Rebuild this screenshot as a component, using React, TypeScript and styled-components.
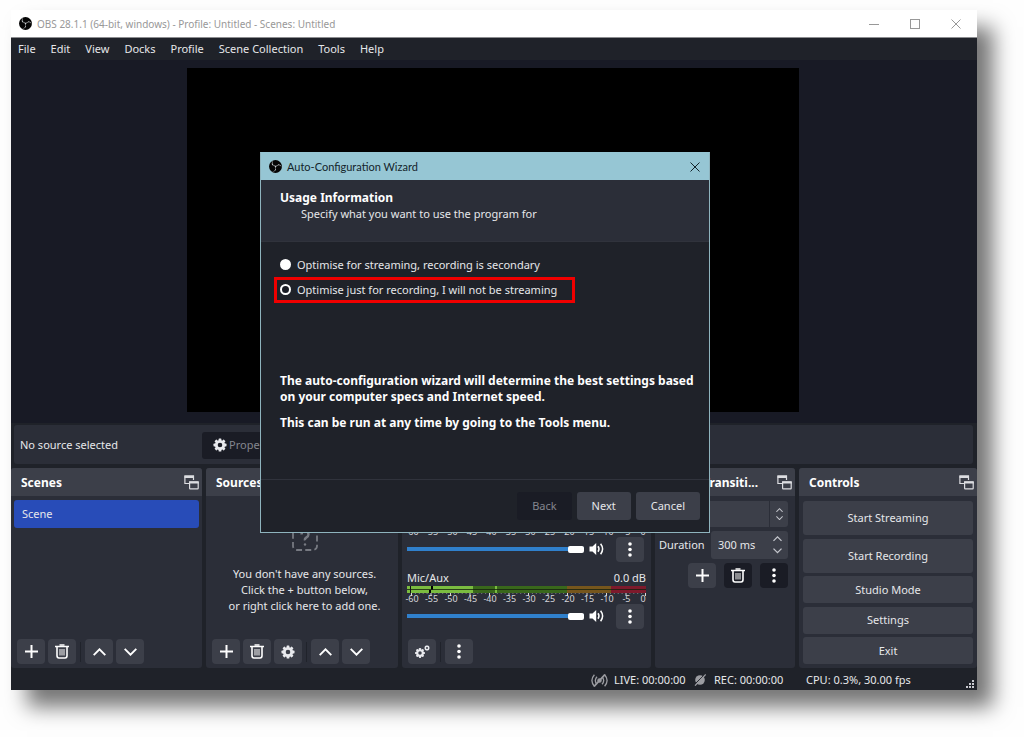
import React from "react";
import styled, { createGlobalStyle, css } from "styled-components";
import { SiObsstudio } from "react-icons/si";

const GlobalStyle = createGlobalStyle`
  * { box-sizing: border-box; }
  body {
    margin: 0;
    background: #fefefe;
    font-family: "Noto Sans", "Open Sans", sans-serif;
    font-size: 11px;
    line-height: 16px;
    color: #e6e7ea;
  }
  button, input, select { font: inherit; color: inherit; }
  p, h1, h2 { margin: 0; }
`;

const Page = styled.div`
  padding: 10px 47px 47px 11px;
`;

const Window = styled.div`
  position: relative;
  display: flex;
  flex-direction: column;
  background: #1f2229;
  box-shadow: 16px 17px 20px rgba(0, 0, 0, 0.54);
`;

/* ---------- title bars ---------- */

const TitleBar = styled.header<{ $accent?: boolean }>`
  display: flex;
  align-items: center;
  gap: 5px;
  height: 28px;
  padding: 0 7px 0 8px;
  font-family: ${(p) => (p.$accent ? 'Lato, "Open Sans", sans-serif' : '"Noto Sans", "Open Sans", sans-serif')};
  font-size: ${(p) => (p.$accent ? 11 : 10)}px;
  background: ${(p) => (p.$accent ? "#96c6d4" : "#ffffff")};
  color: ${(p) => (p.$accent ? "#14242b" : "#989898")};
  border-bottom: ${(p) => (p.$accent ? "none" : "1px solid #8c8d90")};
`;

const TitleText = styled.h1`
  flex: 1;
  font-size: inherit;
  font-weight: 400;
`;

const LogoDisc = styled.span`
  display: flex;
  align-items: center;
  justify-content: center;
  flex: none;
  width: 13px;
  height: 13px;
  border-radius: 50%;
  overflow: hidden;
  background: #050505;
  color: #c9cdd0;
  svg { flex: none; }
`;

const CaptionButtons = styled.div`
  display: flex;
  gap: 13px;
`;

const CaptionButton = styled.button`
  display: flex;
  align-items: center;
  justify-content: center;
  width: 28px;
  height: 26px;
  padding: 0;
  border: none;
  background: none;
`;

/* ---------- menu ---------- */

const MenuBar = styled.nav`
  display: flex;
  gap: 15px;
  height: 22px;
  padding: 2px 7px;
  background: #1f2229;
`;

const MenuItem = styled.button`
  padding: 0;
  border: none;
  background: none;
  line-height: 18px;
`;

/* ---------- preview and context bar ---------- */

const Preview = styled.main`
  display: flex;
  justify-content: center;
  padding: 8px 2px 11px 0;
  background: #181a25;
`;

const Canvas = styled.div`
  width: 612px;
  max-width: 100%;
  height: 344px;
  background: #000;
`;

const ContextBar = styled.div`
  display: flex;
  align-items: center;
  height: 39px;
  margin: 2px 4px 4px 3px;
  padding: 1px 6px 0;
  background: #2b2e38;
  border-radius: 3px;
`;

const ContextLabel = styled.span`
  width: 182px;
`;

const PropertiesButton = styled.button`
  display: flex;
  align-items: center;
  gap: 2px;
  height: 27px;
  padding: 0 11px;
  border: none;
  border-radius: 3px;
  background: #1a1c25;
  color: #84868e;
`;

/* ---------- docks ---------- */

const Docks = styled.div`
  display: grid;
  grid-template-columns: 191fr 192fr 249fr 140fr 178fr;
  column-gap: 4px;
`;

const DockPanel = styled.section`
  display: flex;
  flex-direction: column;
  min-width: 0;
  height: 200px;
  background: #2b2e38;
  border-radius: 3px;
  overflow: hidden;
`;

const DockHeader = styled.div`
  display: flex;
  align-items: center;
  gap: 8px;
  height: 28px;
  flex: none;
  padding: 1px 3px 0 10px;
  background: #3c3f49;
`;

const DockTitle = styled.h2`
  flex: 1;
  min-width: 0;
  font-size: 12px;
  font-weight: 700;
  color: #fefefe;
  white-space: nowrap;
`;

const PlainButton = styled.button`
  display: flex;
  padding: 0;
  border: none;
  background: none;
`;

const Toolbar = styled.div`
  display: flex;
  align-items: center;
  gap: 3px;
  margin-top: auto;
  padding: 0 6px 4px;
`;

const Separator = styled.span`
  width: 1px;
  height: 20px;
  margin: 0 1px;
  background: #20232b;
`;

const ToolButton = styled.button<{ $dim?: boolean }>`
  display: flex;
  align-items: center;
  justify-content: center;
  flex: none;
  width: 28px;
  height: 25px;
  padding: 0;
  border: none;
  border-radius: 4px;
  background: ${(p) => (p.$dim ? "#1a1c25" : "#3c3f49")};
`;

const SceneList = styled.ul`
  margin: 0;
  padding: 4px 3px;
  list-style: none;
`;

const SceneItem = styled.li`
  height: 28px;
  padding: 6px 8px;
  border-radius: 3px;
  background: #284cb8;
`;

const EmptySources = styled.div`
  display: flex;
  flex-direction: column;
  align-items: center;
  gap: 15px;
  padding: 29px 0 0 5px;
  text-align: center;
  p { white-space: pre-line; }
`;

/* ---------- mixer ---------- */

const MixerBody = styled.div`
  display: flex;
  flex-direction: column;
  gap: 9px;
  padding: 7px 5px 0;
`;

const Channel = styled.div`
  display: flex;
  flex-direction: column;
  height: 58px;
  justify-content: flex-end;
`;

const ChannelHead = styled.div`
  display: flex;
  justify-content: space-between;
`;

const Meter = styled.svg`
  display: block;
  width: 100%;
  height: 18px;
  overflow: visible;
  text {
    font-size: 9px;
    fill: #d5d6da;
    text-anchor: middle;
  }
`;

const VolumeRow = styled.div`
  display: flex;
  align-items: center;
  height: 24px;
`;

const Volume = styled.input`
  appearance: none;
  flex: 1;
  min-width: 0;
  height: 8px;
  margin: 0 5px 0 0;
  background: linear-gradient(#3080cc, #3080cc) center / 100% 4px no-repeat;
  &::-webkit-slider-thumb {
    appearance: none;
    width: 16px;
    height: 7px;
    border-radius: 2px;
    background: #fff;
  }
`;

const MuteButton = styled(PlainButton)`
  width: 16px;
  margin-right: 11px;
`;

const ChannelMenu = styled(ToolButton)`
  margin-right: 2px;
`;

/* ---------- transitions ---------- */

const TransitionBody = styled.div`
  display: flex;
  flex-direction: column;
  gap: 4px;
  padding: 5px 7px 0 4px;
`;

const SelectBox = styled.div`
  display: grid;
  grid-template-columns: 1fr 18px;
  gap: 1px;
  height: 26px;
  border-radius: 3px;
  overflow: hidden;
`;

const TransitionSelect = styled.select`
  appearance: none;
  min-width: 0;
  border: none;
  background: #3c3f49;
`;

const SelectArrows = styled.span`
  display: flex;
  align-items: center;
  justify-content: center;
  background: #3c3f49;
`;

const DurationRow = styled.div`
  display: flex;
  align-items: center;
  gap: 4px;
  label { flex: 1; }
`;

const SpinBox = styled.div`
  display: flex;
  align-items: center;
  width: 77px;
  height: 28px;
  padding: 0 6px 0 7px;
  border-radius: 3px;
  background: #3c3f49;
`;

const SpinInput = styled.input`
  flex: 1;
  min-width: 0;
  padding: 0;
  border: none;
  background: none;
`;

const TransitionButtons = styled.div`
  display: flex;
  justify-content: flex-end;
  gap: 8px;
`;

/* ---------- controls ---------- */

const ControlsBody = styled.div`
  flex: 1;
  display: flex;
  flex-direction: column;
  justify-content: space-between;
  padding: 5px 4px 4px;
`;

const ControlButton = styled.button<{ $tall?: boolean }>`
  height: ${(p) => (p.$tall ? 34 : 27)}px;
  padding: 0;
  border: none;
  border-radius: 3px;
  background: #3c3f49;
`;

/* ---------- status bar ---------- */

const StatusBar = styled.footer`
  display: flex;
  align-items: center;
  justify-content: flex-end;
  height: 22px;
  padding: 2px 2px 0 0;
`;

const StatusItem = styled.span<{ $width?: number; $gap?: number }>`
  display: flex;
  align-items: center;
  gap: ${(p) => p.$gap ?? 6}px;
  width: ${(p) => (p.$width ? p.$width + "px" : "auto")};
`;

const Grip = styled.svg`
  align-self: flex-end;
  margin-bottom: 1px;
`;

/* ---------- wizard ---------- */

const Dialog = styled.form`
  position: absolute;
  left: 249px;
  top: 142px;
  width: 450px;
  display: flex;
  flex-direction: column;
  border: 1px solid #8fb4be;
  border-top-color: #96c6d4;
  background: #1f2229;
`;

const DialogTitle = styled(TitleBar)`
  height: 27px;
  padding: 0 0 0 8px;
`;

const DialogHeader = styled.div`
  height: 62px;
  padding: 9px 19px;
  background: #2b2e38;
  border-bottom: 1px solid #30333c;
  h2 {
    font-size: 12px;
    line-height: 17px;
    color: #fefefe;
  }
  p {
    line-height: 16px;
    padding-left: 21px;
  }
`;

const DialogBody = styled.div`
  display: flex;
  flex-direction: column;
  align-items: flex-start;
  height: 237px;
  padding: 13px 9px 0 19px;
`;

const Option = styled.label<{ $marked?: boolean }>`
  display: flex;
  align-items: center;
  gap: 6px;
  height: 20px;
  margin-bottom: 5px;
  ${(p) =>
    p.$marked &&
    css`
      outline: 3px solid #f00000;
      outline-offset: 0;
      margin-left: -3px;
      padding: 0 15px 0 3px;
    `}
`;

const Radio = styled.input`
  appearance: none;
  width: 11px;
  height: 11px;
  margin: 0 0 1px;
  border: 2px solid #fff;
  border-radius: 50%;
  background: #fff;
  &:checked { background: #1a1c25; }
`;

const Advice = styled.div`
  display: flex;
  flex-direction: column;
  gap: 10px;
  margin-top: 68px;
  font-size: 12px;
  font-weight: 700;
  color: #fefefe;
`;

const DialogFooter = styled.div`
  display: flex;
  justify-content: flex-end;
  gap: 5px;
  height: 53px;
  padding: 12px 9px 0;
  border-top: 1px solid #30333c;
`;

const DialogButton = styled.button`
  min-width: 54px;
  height: 28px;
  padding: 0 15px;
  border: none;
  border-radius: 3px;
  background: #3c3f49;
  &:disabled {
    background: #1a1c25;
    color: #84868e;
  }
`;

/* ---------- icons ---------- */

const Logo = () => (
  <LogoDisc>
    <SiObsstudio size={15} />
  </LogoDisc>
);

const CloseIcon = () => (
  <svg width="10" height="10" viewBox="0 0 10 10" stroke="currentColor" fill="none">
    <path d="M0.5 0.5l9 9M9.5 0.5l-9 9" />
  </svg>
);

const PlusIcon = () => (
  <svg width="13" height="13" viewBox="0 0 13 13" stroke="#fefefe" strokeWidth="2">
    <path d="M6.5 0v13M0 6.5h13" />
  </svg>
);

const TrashIcon = () => (
  <svg width="14" height="15" viewBox="0 0 14 15" fill="none" stroke="#fefefe">
    <path d="M0 2.5h14" strokeWidth="1.6" />
    <path d="M4.5 1h5" strokeWidth="1.6" />
    <path d="M2 3v8.8q0 2.2 2 2.2h6q2 0 2-2.2V3" strokeWidth="1.6" />
    <path d="M5 5v6.5M7 5v6.5M9 5v6.5" strokeWidth="1" />
  </svg>
);

const ChevronIcon = ({ down, size = 13 }: { down?: boolean; size?: number }) => (
  <svg width={size} height={(size * 8) / 13} viewBox="0 0 13 8" fill="none" stroke={size < 13 ? "#c4c6cc" : "#fefefe"} strokeWidth="1.9">
    <path d={down ? "M0.7 0.9L6.5 6.7L12.3 0.9" : "M0.7 7.1L6.5 1.3L12.3 7.1"} />
  </svg>
);

const ArrowPair = styled.span<{ $gap: number }>`
  display: flex;
  flex-direction: column;
  gap: ${(p) => p.$gap}px;
`;

const DotsIcon = () => (
  <svg width="4" height="15" viewBox="0 0 4 15" fill="#fefefe">
    <circle cx="2" cy="2" r="1.8" />
    <circle cx="2" cy="7.5" r="1.8" />
    <circle cx="2" cy="13" r="1.8" />
  </svg>
);

const teeth = [0, 45, 90, 135, 180, 225, 270, 315];

const GearShape = ({ x, y, s }: { x: number; y: number; s: number }) => (
  <g transform={`translate(${x} ${y}) scale(${s})`} fill="#e9eaee">
    <circle r="4" fill="none" stroke="#e9eaee" strokeWidth="3" />
    {teeth.map((a) => (
      <rect key={a} x="-1.5" y="-7" width="3" height="3" rx="0.6" transform={`rotate(${a})`} />
    ))}
  </g>
);

const GearIcon = () => (
  <svg width="14" height="14" viewBox="0 0 14 14">
    <GearShape x={7} y={7} s={0.93} />
  </svg>
);

const GearsIcon = () => (
  <svg width="15" height="13" viewBox="0 0 15 13">
    <GearShape x={5} y={8} s={0.7} />
    <GearShape x={12} y={3} s={0.4} />
  </svg>
);

const PopOutIcon = () => (
  <svg width="15" height="15" viewBox="0 0 15 15" fill="none" stroke="#dcdde1">
    <path d="M5 8.5H0.9V1H9.5V5" strokeWidth="1.2" />
    <path d="M0.5 1.7h9.5" strokeWidth="2.4" />
    <rect x="5.6" y="7" width="8.6" height="6.8" rx="0.6" strokeWidth="1.2" />
    <path d="M5 7.4h9.8" strokeWidth="2.4" />
  </svg>
);

const SpeakerIcon = () => (
  <svg width="16" height="14" viewBox="0 0 16 14" fill="none" stroke="#fefefe">
    <path d="M0.5 4.5h3L7.2 1v12L3.5 9.5h-3z" fill="#fefefe" stroke="none" />
    <path d="M9 4.3q2 2.7 0 5.4" strokeWidth="1.5" />
    <path d="M11.6 1.8q4 5.2 0 10.4" strokeWidth="1.5" />
  </svg>
);

const MissingIcon = () => (
  <svg width="26" height="26" viewBox="0 0 26 26" fill="none" stroke="#777a82" strokeWidth="1.8">
    <rect x="1" y="1" width="24" height="24" rx="4" strokeDasharray="6 3.2" />
    <path d="M9.5 9.5q0-3.5 3.5-3.5t3.5 3.2q0 2-2 3.2t-1.5 3" strokeWidth="2.4" />
    <circle cx="13" cy="19.5" r="1.2" fill="#777a82" stroke="none" />
  </svg>
);

const LiveIcon = () => (
  <svg width="17" height="13" viewBox="0 0 17 13" fill="none" stroke="#9b9ca1" strokeWidth="1.3">
    <path d="M3.4 0.8q-5 5.7 0 11.4M6 2.8q-3.4 3.7 0 7.4M13.6 0.8q5 5.7 0 11.4M11 2.8q3.4 3.7 0 7.4" />
    <circle cx="8.5" cy="6.5" r="1.6" fill="#9b9ca1" />
    <path d="M3 12.5L14 0.5" strokeWidth="1.8" />
  </svg>
);

const RecIcon = () => (
  <svg width="12" height="12" viewBox="0 0 12 12">
    <circle cx="6" cy="6" r="4.8" fill="#9b9ca1" />
    <path d="M0 11L10.5 0.5" stroke="#1f2229" strokeWidth="1" />
    <path d="M1 11.7L11.7 0.5" stroke="#9b9ca1" strokeWidth="1.2" />
  </svg>
);

/* ---------- parts ---------- */

const scaleMarks = [60, 55, 50, 45, 40, 35, 30, 25, 20, 15, 10, 5, 0];
const markX = (db: number) => 238 - db * 3.9;

const LevelMeter = ({ live }: { live?: boolean }) => (
  <Meter viewBox="0 0 239 18" role="img" aria-label="Level meter">
    <rect x="0" y="0" width="160" height="7" fill="#39681b" />
    <rect x="160" y="0" width="44" height="7" fill="#76561c" />
    <rect x="204" y="0" width="35" height="7" fill="#7d1a2c" />
    {live && (
      <>
        <rect x="0" y="0" width="66" height="7" fill="#7bbc40" />
        <rect x="3" y="0" width="1" height="7" fill="#101010" />
        <rect x="24" y="0" width="2" height="4" fill="#000" />
        <rect x="22" y="4" width="2" height="3" fill="#000" />
        <rect x="88" y="0" width="2" height="7" fill="#7bbc40" />
      </>
    )}
    <rect x="0" y="3" width="239" height="1" fill="#17210f" opacity="0.8" />
    {Array.from({ length: 61 }, (_, i) => (
      <rect
        key={i}
        x={markX(i)}
        y="7"
        width="1"
        height={i % 5 ? 1 : 3}
        fill={i % 5 ? "#777a82" : "#d5d6da"}
      />
    ))}
    {scaleMarks.map((m) => (
      <text key={m} x={m === 0 ? 236 : markX(m) + 1} y="16">
        {m ? -m : 0}
      </text>
    ))}
  </Meter>
);

const VolumeControls = ({ name }: { name: string }) => (
  <VolumeRow>
    <Volume type="range" min={0} max={100} defaultValue={100} aria-label={`${name} volume`} />
    <MuteButton type="button" aria-label={`Mute ${name}`}>
      <SpeakerIcon />
    </MuteButton>
    <ChannelMenu type="button" aria-label={`${name} options`}>
      <DotsIcon />
    </ChannelMenu>
  </VolumeRow>
);

const Dock = ({ title, popOut = true, children }: { title?: string; popOut?: boolean; children: React.ReactNode }) => (
  <DockPanel>
    <DockHeader>
      {title && <DockTitle>{title}</DockTitle>}
      {popOut && (
        <PlainButton type="button" aria-label="Float dock">
          <PopOutIcon />
        </PlainButton>
      )}
    </DockHeader>
    {children}
  </DockPanel>
);

const Tool = ({ label, dim, children }: { label: string; dim?: boolean; children: React.ReactNode }) => (
  <ToolButton type="button" aria-label={label} $dim={dim}>
    {children}
  </ToolButton>
);

const Wizard = () => (
  <Dialog role="dialog" aria-label="Auto-Configuration Wizard">
    <DialogTitle $accent>
      <Logo />
      <TitleText>Auto-Configuration Wizard</TitleText>
      <CaptionButton type="button" aria-label="Close wizard">
        <CloseIcon />
      </CaptionButton>
    </DialogTitle>
    <DialogHeader>
      <h2>Usage Information</h2>
      <p>Specify what you want to use the program for</p>
    </DialogHeader>
    <DialogBody>
      <Option>
        <Radio type="radio" name="usage" />
        Optimise for streaming, recording is secondary
      </Option>
      <Option $marked>
        <Radio type="radio" name="usage" defaultChecked />
        Optimise just for recording, I will not be streaming
      </Option>
      <Advice>
        <p>The auto-configuration wizard will determine the best settings based on your computer specs and Internet speed.</p>
        <p>This can be run at any time by going to the Tools menu.</p>
      </Advice>
    </DialogBody>
    <DialogFooter>
      <DialogButton type="button" disabled>Back</DialogButton>
      <DialogButton type="button">Next</DialogButton>
      <DialogButton type="button">Cancel</DialogButton>
    </DialogFooter>
  </Dialog>
);

const menus = ["File", "Edit", "View", "Docks", "Profile", "Scene Collection", "Tools", "Help"];

export default function App() {
  return (
    <Page>
      <GlobalStyle />
      <Window>
        <TitleBar>
          <Logo />
          <TitleText>OBS 28.1.1 (64-bit, windows) - Profile: Untitled - Scenes: Untitled</TitleText>
          <CaptionButtons>
            <CaptionButton aria-label="Minimise">
              <svg width="10" height="10" stroke="currentColor"><path d="M0 5.5h10" /></svg>
            </CaptionButton>
            <CaptionButton aria-label="Maximise">
              <svg width="10" height="10" stroke="currentColor" fill="none"><rect x="0.5" y="0.5" width="9" height="9" /></svg>
            </CaptionButton>
            <CaptionButton aria-label="Close">
              <CloseIcon />
            </CaptionButton>
          </CaptionButtons>
        </TitleBar>
        <MenuBar>
          {menus.map((m) => (
            <MenuItem key={m}>{m}</MenuItem>
          ))}
        </MenuBar>
        <Preview>
          <Canvas />
        </Preview>
        <ContextBar>
          <ContextLabel>No source selected</ContextLabel>
          <PropertiesButton>
            <GearIcon />
            Properties
          </PropertiesButton>
        </ContextBar>
        <Docks>
          <Dock title="Scenes">
            <SceneList>
              <SceneItem>Scene</SceneItem>
            </SceneList>
            <Toolbar>
              <Tool label="Add scene"><PlusIcon /></Tool>
              <Tool label="Remove scene"><TrashIcon /></Tool>
              <Separator />
              <Tool label="Move scene up"><ChevronIcon /></Tool>
              <Tool label="Move scene down"><ChevronIcon down /></Tool>
            </Toolbar>
          </Dock>
          <Dock title="Sources">
            <EmptySources>
              <MissingIcon />
              <p>{"You don't have any sources.\nClick the + button below,\nor right click here to add one."}</p>
            </EmptySources>
            <Toolbar>
              <Tool label="Add source"><PlusIcon /></Tool>
              <Tool label="Remove source"><TrashIcon /></Tool>
              <Tool label="Source properties"><GearIcon /></Tool>
              <Separator />
              <Tool label="Move source up"><ChevronIcon /></Tool>
              <Tool label="Move source down"><ChevronIcon down /></Tool>
            </Toolbar>
          </Dock>
          <Dock popOut={false}>
            <MixerBody>
              <Channel>
                <LevelMeter />
                <VolumeControls name="Desktop" />
              </Channel>
              <Channel>
                <ChannelHead>
                  <span>Mic/Aux</span>
                  <span>0.0 dB</span>
                </ChannelHead>
                <LevelMeter live />
                <VolumeControls name="Mic/Aux" />
              </Channel>
            </MixerBody>
            <Toolbar>
              <Tool label="Advanced audio properties"><GearsIcon /></Tool>
              <Separator />
              <Tool label="Mixer menu"><DotsIcon /></Tool>
            </Toolbar>
          </Dock>
          <Dock title="Scene Transiti...">
            <TransitionBody>
              <SelectBox>
                <TransitionSelect aria-label="Transition" />
                <SelectArrows>
                  <ArrowPair $gap={4}>
                    <ChevronIcon size={7} />
                    <ChevronIcon size={7} down />
                  </ArrowPair>
                </SelectArrows>
              </SelectBox>
              <DurationRow>
                <label htmlFor="duration">Duration</label>
                <SpinBox>
                  <SpinInput id="duration" defaultValue="300 ms" />
                  <ArrowPair $gap={6}>
                    <ChevronIcon size={9} />
                    <ChevronIcon size={9} down />
                  </ArrowPair>
                </SpinBox>
              </DurationRow>
              <TransitionButtons>
                <Tool label="Add transition"><PlusIcon /></Tool>
                <Tool label="Remove transition" dim><TrashIcon /></Tool>
                <Tool label="Transition options" dim><DotsIcon /></Tool>
              </TransitionButtons>
            </TransitionBody>
          </Dock>
          <Dock title="Controls">
            <ControlsBody>
              <ControlButton $tall>Start Streaming</ControlButton>
              <ControlButton $tall>Start Recording</ControlButton>
              <ControlButton>Studio Mode</ControlButton>
              <ControlButton>Settings</ControlButton>
              <ControlButton>Exit</ControlButton>
            </ControlsBody>
          </Dock>
        </Docks>
        <StatusBar>
          <StatusItem $width={103}><LiveIcon />LIVE: 00:00:00</StatusItem>
          <StatusItem $width={112} $gap={8}><RecIcon />REC: 00:00:00</StatusItem>
          <StatusItem $width={160}>CPU: 0.3%, 30.00 fps</StatusItem>
          <Grip width="9" height="9" fill="#c9cad0">
            {[[6, 0], [3, 3], [6, 3], [0, 6], [3, 6], [6, 6]].map(([x, y]) => (
              <rect key={`${x}-${y}`} x={x} y={y} width="2" height="2" />
            ))}
          </Grip>
        </StatusBar>
        <Wizard />
      </Window>
    </Page>
  );
}
